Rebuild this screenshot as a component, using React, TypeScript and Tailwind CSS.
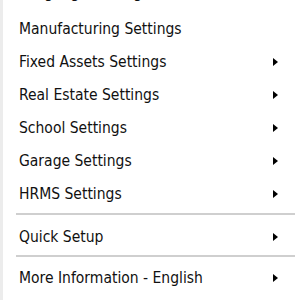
import React from 'react';

type Item = { label: string; submenu?: boolean; tall?: boolean } | { separator: true; size: 'lg' | 'sm' };

const items: Item[] = [
  { label: 'Language Settings', tall: true },
  { label: 'Manufacturing Settings' },
  { label: 'Fixed Assets Settings', submenu: true },
  { label: 'Real Estate Settings', submenu: true },
  { label: 'School Settings', submenu: true },
  { label: 'Garage Settings', submenu: true },
  { label: 'HRMS Settings', submenu: true },
  { separator: true, size: 'lg' },
  { label: 'Quick Setup', submenu: true },
  { separator: true, size: 'sm' },
  { label: 'More Information - English', submenu: true },
];

export default function App() {
  return (
    <div
      className="w-[299px] h-[300px] overflow-hidden bg-white border-l-[3px] border-[#ececec]"
      style={{ fontFamily: '"DejaVu Sans Condensed", Tahoma, "DejaVu Sans", sans-serif' }}
    >
      <div className="-mt-[27px] flex flex-col">
        {items.map((item, i) =>
          'separator' in item ? (
            <div
              key={i}
              className={`${item.size === 'lg' ? 'h-[10px]' : 'h-[8px]'} flex items-center pl-[13px] pr-[4px]`}
            >
              <div className="w-full h-[2px] bg-[#cfcfcf]" />
            </div>
          ) : (
            <div
              key={i}
              className={`${item.tall ? 'h-[38px]' : 'h-[33px]'} flex items-center pl-[16px] pr-[21px] text-[15.5px] text-[#111]`}
            >
              <span className="flex-1 whitespace-nowrap pt-[4px]">{item.label}</span>
              {item.submenu && (
                <span className="w-0 h-0 mt-[2px] border-y-[4px] border-y-transparent border-l-[5px] border-l-black" />
              )}
            </div>
          )
        )}
      </div>
    </div>
  );
}
